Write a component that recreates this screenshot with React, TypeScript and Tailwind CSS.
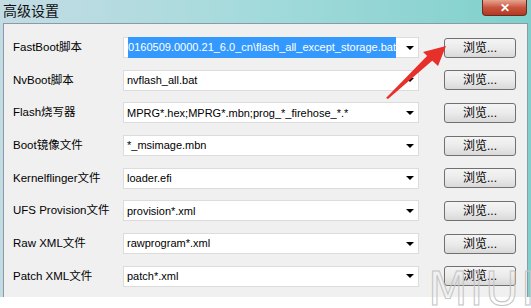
import { ReactNode } from 'react';

interface Row {
  label: string;
  value: string;
  selected?: boolean;
}

const rows: Row[] = [
  { label: 'FastBoot脚本', value: '0160509.0000.21_6.0_cn\\flash_all_except_storage.bat', selected: true },
  { label: 'NvBoot脚本', value: 'nvflash_all.bat' },
  { label: 'Flash烧写器', value: 'MPRG*.hex;MPRG*.mbn;prog_*_firehose_*.*' },
  { label: 'Boot镜像文件', value: '*_msimage.mbn' },
  { label: 'Kernelflinger文件', value: 'loader.efi' },
  { label: 'UFS Provision文件', value: 'provision*.xml' },
  { label: 'Raw XML文件', value: 'rawprogram*.xml' },
  { label: 'Patch XML文件', value: 'patch*.xml' },
];

function ComboBox({ children, alignEnd }: { children: ReactNode; alignEnd?: boolean }) {
  return (
    <div className="w-[296px] h-[21px] bg-white border border-[#dcdcdc] flex items-center pl-[3px] pr-[4px]">
      <div className={alignEnd ? 'flex-1 flex justify-end overflow-hidden whitespace-nowrap text-[11px]' : 'flex-1 overflow-hidden whitespace-nowrap text-[11px]'}>
        {children}
      </div>
      <div className="w-0 h-0 border-l-[4px] border-r-[4px] border-t-[4px] border-l-transparent border-r-transparent border-t-black ml-[10px]" />
    </div>
  );
}

export default function App() {
  return (
    <div
      className="w-[531px] h-[308px] bg-white relative overflow-hidden text-[11.5px] text-black"
      style={{ fontFamily: '"Liberation Sans", "Noto Sans CJK SC", sans-serif' }}
    >
      {/* window frame */}
      <div className="h-[297px] flex flex-col bg-gradient-to-r from-[#c3dce4] via-[#a2dadb] to-[#7fd0cc]">
        <div className="h-[23px] flex items-start justify-between pl-[3px] pr-[3px]">
          <span className="text-[14px] leading-[22px] text-[#111]">高级设置</span>
          <div className="w-[45px] h-[16px] mr-[1px] rounded-b-[4px] border border-t-0 border-[#6b2a1f] bg-gradient-to-b from-[#e6a592] via-[#c9533c] to-[#b33a22] flex items-center justify-center">
            <span className="text-white text-[12px] font-bold leading-none">✕</span>
          </div>
        </div>

        <div className="flex-1 ml-[3px] mr-[3px] bg-[#f0f0f0] border-l border-r border-t border-[#8a9ba3] pl-[9px] pt-[13px] flex flex-col gap-[11.7px]">
          {rows.map((row) => (
            <div key={row.label} className="flex items-center h-[21px]">
              <span className="w-[110px] whitespace-nowrap">{row.label}</span>
              <ComboBox alignEnd={row.selected}>
                {row.selected ? (
                  <span className="shrink-0 bg-[#3399ff] text-white py-[2px]">{row.value}</span>
                ) : (
                  <span>{row.value}</span>
                )}
              </ComboBox>
              <button className="ml-[25px] w-[72px] h-[20px] rounded-[3px] border border-[#707070] bg-gradient-to-b from-[#f4f4f4] via-[#ebebeb] to-[#d9d9d9] text-[12px] leading-none">
                浏览...
              </button>
            </div>
          ))}
        </div>
      </div>

      {/* red arrow annotation */}
      <svg className="absolute left-0 top-0 pointer-events-none" width="531" height="308">
        <polygon points="386,98 388,99 433,60 428,55" fill="#e8302a" />
        <polygon points="446,46 423,52 438,66" fill="#e8302a" />
      </svg>

      {/* watermark */}
      <div
        className="absolute left-[428px] top-[266px] text-[46px] leading-none tracking-[2px] text-transparent pointer-events-none"
        style={{ WebkitTextStroke: '1px #c4c4c4', fontFamily: '"DejaVu Sans", sans-serif' }}
      >
        MIUI
      </div>
    </div>
  );
}
